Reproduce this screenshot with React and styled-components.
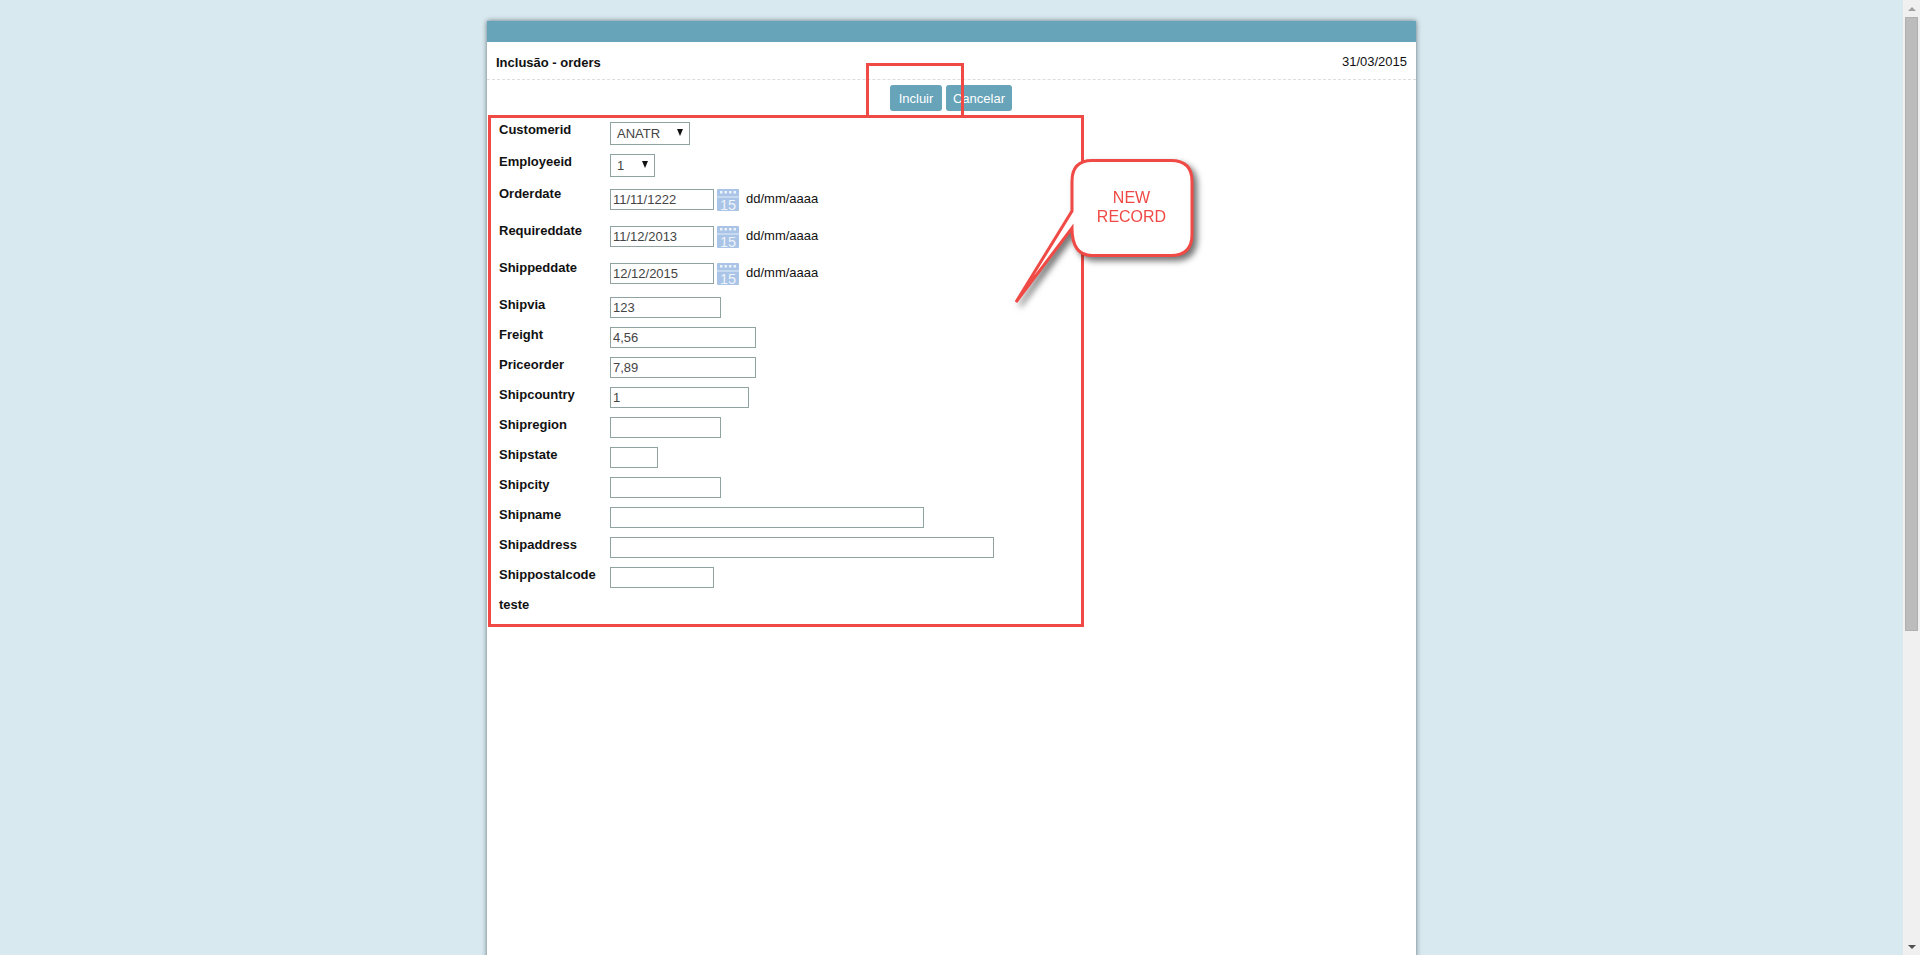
import React from 'react';
import styled, { createGlobalStyle } from 'styled-components';

const GlobalStyle = createGlobalStyle`
  html, body {
    margin: 0;
    padding: 0;
    height: 100%;
    overflow: hidden;
    background: #d9e9f0;
    font-family: "Liberation Sans", Arial, sans-serif;
    font-size: 13px;
    color: #111;
  }
`;

const Page = styled.div`
  display: flex;
  height: 955px;
  overflow: hidden;
`;

const Main = styled.main`
  flex: 1;
  display: flex;
  justify-content: center;
  padding-top: 21px;
`;

const Panel = styled.div`
  position: relative;
  width: 929px;
  height: 1400px;
  background: #fff;
  box-shadow: 0 0 5px rgba(40, 60, 70, 0.7);
`;

const TopBar = styled.div`
  height: 21px;
  background: #67a3b9;
`;

const TitleRow = styled.div`
  box-sizing: border-box;
  display: flex;
  justify-content: space-between;
  align-items: center;
  height: 38px;
  padding: 3px 9px 0;
  border-bottom: 1px dashed #ddd;
`;

const PageTitle = styled.h1`
  margin: 0;
  font-size: 13px;
  font-weight: bold;
`;

const DateText = styled.span`
  margin-top: -2px;
  font-size: 13px;
`;

const ButtonBar = styled.div`
  display: flex;
  justify-content: center;
  gap: 4px;
  padding: 5px 1px 0 0;
  height: 30px;
`;

const Button = styled.button`
  height: 26px;
  width: ${({ $width }) => $width}px;
  padding: 0;
  border: 0;
  border-radius: 3px;
  background: #67a3b9;
  color: #fff;
  font-family: inherit;
  font-size: 13px;
`;

const FormBox = styled.form`
  margin-left: 1px;
  width: 582px;
  height: 506px;
  border: 3px solid #ef4a45;
  padding-left: 8px;
`;

const Row = styled.div`
  display: flex;
  align-items: flex-start;
  margin-top: ${({ $top }) => $top}px;
`;

const Label = styled.label`
  width: 111px;
  flex: none;
  margin-top: ${({ $lift }) => -($lift || 0)}px;
  font-weight: bold;
  font-size: 13px;
  line-height: 16px;
`;

const TextInput = styled.input`
  box-sizing: border-box;
  width: ${({ $width }) => $width}px;
  height: 21px;
  padding: 0 2px;
  border: 1px solid #8fa3a0;
  border-radius: 0;
  background: #fff;
  color: #444;
  font-family: inherit;
  font-size: 13px;
  outline: none;
`;

const SelectBox = styled.div`
  box-sizing: border-box;
  display: flex;
  justify-content: space-between;
  align-items: center;
  width: ${({ $width }) => $width}px;
  height: 23px;
  padding: 0 6px;
  border: 1px solid #8fa3a0;
  color: #444;
  font-size: 13px;
`;

const Caret = styled.span`
  width: 0;
  height: 0;
  margin-bottom: 2px;
  border-left: 3px solid transparent;
  border-right: 3px solid transparent;
  border-top: 7px solid #111;
`;

const DateIcon = styled.svg`
  width: 22px;
  height: 22px;
  margin-left: 3px;
  flex: none;
`;

const Hint = styled.span`
  margin-left: 7px;
  line-height: 14px;
  padding-top: 3px;
  font-size: 13px;
`;

const Flag = styled.div`
  position: absolute;
  left: 379px;
  top: 42px;
  width: 92px;
  height: 49px;
  border: 3px solid #ef4a45;
  border-bottom: 0;
  pointer-events: none;
`;

const Callout = styled.div`
  position: absolute;
  left: 529px;
  top: 138px;
  width: 190px;
  height: 156px;
  filter: drop-shadow(4px 4px 3px rgba(0, 0, 0, 0.55));
`;

const CalloutShape = styled.svg`
  display: block;
  width: 190px;
  height: 156px;
  overflow: visible;
`;

const CalloutText = styled.div`
  position: absolute;
  left: 54px;
  top: 29px;
  width: 123px;
  text-align: center;
  color: #ef4a45;
  font-size: 16px;
  line-height: 19px;
`;

const Rail = styled.aside`
  flex: none;
  width: 17px;
  display: flex;
  flex-direction: column;
  align-items: center;
  background: #f0f0f0;
`;

const RailArrow = styled.div`
  flex: none;
  height: 17px;
  display: flex;
  align-items: center;
  justify-content: center;
`;

const RailThumb = styled.div`
  flex: none;
  width: 13px;
  height: 614px;
  background: #bcbcbc;
  border: 1px solid #b0b0b0;
  box-sizing: border-box;
`;

const RailSpace = styled.div`
  flex: 1;
`;

const Arrow = styled.span`
  width: 0;
  height: 0;
  border-left: 4px solid transparent;
  border-right: 4px solid transparent;
  ${({ $up }) => ($up ? 'border-bottom: 4px solid #a0a0a0;' : 'border-top: 4px solid #505050;')}
`;

const CalendarIcon = () => (
  <DateIcon viewBox="0 0 22 22">
    <rect width="22" height="22" rx="1" fill="#a9c4e6" />
    <rect y="7.5" width="22" height="1" fill="#e4edf8" />
    {[3, 7.5, 12, 16.5].map((x) => (
      <rect key={x} x={x} y="2" width="2.5" height="2.5" fill="#eef3fa" />
    ))}
    <text x="11" y="20.5" textAnchor="middle" fontSize="14.5" fill="#eef3fa" fontFamily="Liberation Sans">15</text>
  </DateIcon>
);

const plainRows = [
  { label: 'Shipvia', value: '123', width: 111, top: 12 },
  { label: 'Freight', value: '4,56', width: 146, top: 9 },
  { label: 'Priceorder', value: '7,89', width: 146, top: 9 },
  { label: 'Shipcountry', value: '1', width: 139, top: 9 },
  { label: 'Shipregion', value: '', width: 111, top: 9 },
  { label: 'Shipstate', value: '', width: 48, top: 9 },
  { label: 'Shipcity', value: '', width: 111, top: 9 },
  { label: 'Shipname', value: '', width: 314, top: 9 },
  { label: 'Shipaddress', value: '', width: 384, top: 9 },
  { label: 'Shippostalcode', value: '', width: 104, top: 9 },
];

const dateRows = [
  { label: 'Orderdate', value: '11/11/1222', top: 12 },
  { label: 'Requireddate', value: '11/12/2013', top: 15 },
  { label: 'Shippeddate', value: '12/12/2015', top: 15 },
];

export default function App() {
  return (
    <Page>
      <GlobalStyle />
      <Main>
        <Panel>
          <TopBar />
          <TitleRow>
            <PageTitle>Inclusão - orders</PageTitle>
            <DateText>31/03/2015</DateText>
          </TitleRow>
          <ButtonBar>
            <Button type="button" $width={52}>Incluir</Button>
            <Button type="button" $width={66}>Cancelar</Button>
          </ButtonBar>
          <FormBox>
            <Row $top={4}>
              <Label>Customerid</Label>
              <SelectBox $width={80}>ANATR<Caret /></SelectBox>
            </Row>
            <Row $top={9}>
              <Label>Employeeid</Label>
              <SelectBox $width={45}>1<Caret /></SelectBox>
            </Row>
            {dateRows.map((row) => (
              <Row key={row.label} $top={row.top}>
                <Label $lift={3}>{row.label}</Label>
                <TextInput $width={104} defaultValue={row.value} />
                <CalendarIcon />
                <Hint>dd/mm/aaaa</Hint>
              </Row>
            ))}
            {plainRows.map((row) => (
              <Row key={row.label} $top={row.top}>
                <Label>{row.label}</Label>
                <TextInput $width={row.width} defaultValue={row.value} />
              </Row>
            ))}
            <Row $top={9}>
              <Label>teste</Label>
            </Row>
          </FormBox>
          <Flag />
          <Callout>
            <CalloutShape viewBox="0 0 190 156">
              <path
                d="M76 1.5 H155 Q176 1.5 176 22.5 V75.5 Q176 96.5 155 96.5 H76 Q56 96.5 56 69 L0 143 L56 52 V22.5 Q56 1.5 76 1.5 Z"
                fill="#fff"
                stroke="#ef4a45"
                strokeWidth="3"
                strokeMiterlimit="12"
              />
            </CalloutShape>
            <CalloutText>NEW<br />RECORD</CalloutText>
          </Callout>
        </Panel>
      </Main>
      <Rail>
        <RailArrow><Arrow $up /></RailArrow>
        <RailThumb />
        <RailSpace />
        <RailArrow><Arrow /></RailArrow>
      </Rail>
    </Page>
  );
}
